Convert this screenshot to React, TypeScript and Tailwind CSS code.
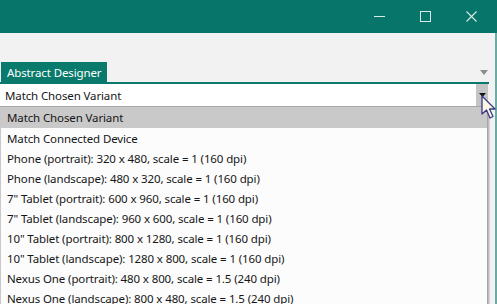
import React from "react";

const items = [
  "Match Chosen Variant",
  "Match Connected Device",
  "Phone (portrait): 320 x 480, scale = 1 (160 dpi)",
  "Phone (landscape): 480 x 320, scale = 1 (160 dpi)",
  "7\" Tablet (portrait): 600 x 960, scale = 1 (160 dpi)",
  "7\" Tablet (landscape): 960 x 600, scale = 1 (160 dpi)",
  "10\" Tablet (portrait): 800 x 1280, scale = 1 (160 dpi)",
  "10\" Tablet (landscape): 1280 x 800, scale = 1 (160 dpi)",
  "Nexus One (portrait): 480 x 800, scale = 1.5 (240 dpi)",
  "Nexus One (landscape): 800 x 480, scale = 1.5 (240 dpi)",
];

export default function App() {
  return (
    <div
      className="relative w-[497px] h-[304px] overflow-hidden flex flex-col bg-[#f2f2f2] text-[11.5px] tracking-[-0.12px] text-[#161616]"
      style={{ fontFamily: '"Noto Sans", "Open Sans", sans-serif' }}
    >
      {/* Title bar */}
      <div className="h-[33px] shrink-0 bg-[#08756a] flex items-center justify-end">
        <svg width="11" height="11" viewBox="0 0 11 11" className="mr-[35px]">
          <line x1="0" y1="5.5" x2="11" y2="5.5" stroke="#d8ebe8" strokeWidth="1" />
        </svg>
        <svg width="11" height="11" viewBox="0 0 11 11" className="mr-[35px]">
          <rect x="0.5" y="0.5" width="10" height="10" fill="none" stroke="#d8ebe8" strokeWidth="1" />
        </svg>
        <svg width="11" height="11" viewBox="0 0 11 11" className="mr-[20px]">
          <line x1="0.5" y1="0.5" x2="10.5" y2="10.5" stroke="#d8ebe8" strokeWidth="1.1" />
          <line x1="10.5" y1="0.5" x2="0.5" y2="10.5" stroke="#d8ebe8" strokeWidth="1.1" />
        </svg>
      </div>

      <div className="flex-1 flex">
        {/* main pane */}
        <div className="w-[495px] flex flex-col">
          <div className="h-[29px] shrink-0" />
          {/* tab row */}
          <div className="h-[20px] shrink-0 flex items-center w-[489px]">
            <div className="ml-[1px] w-[106px] h-[20px] bg-[#0a7a6c] text-white flex items-center pl-[6px] pt-[1px] whitespace-nowrap">
              Abstract Designer
            </div>
            <div className="flex-1" />
            <svg width="8" height="5" viewBox="0 0 8 5" className="mr-[1px] mt-[1px]">
              <path d="M0 0 L8 0 L4 5 Z" fill="#8c8c8c" />
            </svg>
          </div>
          <div className="h-[2px] w-[489px] bg-[#0b7a6c] shrink-0" />
          {/* combo */}
          <div className="h-[23px] w-[488px] shrink-0 flex bg-white border-b border-[#a8a8a8]">
            <div className="flex-1 flex items-center pl-[5px] pt-[1px]">Match Chosen Variant</div>
            <div className="w-[12px] h-full bg-[#c4c4c4] flex items-center justify-center">
              <svg width="7" height="4" viewBox="0 0 7 4">
                <path d="M0 0 L7 0 L3.5 4 Z" fill="#111" />
              </svg>
            </div>
          </div>
          {/* list */}
          <div className="w-[490px] flex">
            <div className="w-[487px] bg-[#fcfcfc] border-l border-[#c8c8c8] flex flex-col">
              {items.map((t, i) => (
                <div
                  key={i}
                  className={
                    "shrink-0 flex items-center pl-[6px] whitespace-nowrap " +
                    (i === 0 ? "h-[21px] pt-[1px] bg-[#c9c9c9]" : "h-[20px] pt-[1px]")
                  }
                >
                  {t}
                </div>
              ))}
            </div>
            <div className="w-[3px] bg-gradient-to-r from-[#9a9a9a] to-[#e0e0e0]" />
          </div>
        </div>
        {/* right window border */}
        <div className="w-[2px] bg-[#6aaba3]" />
      </div>

      {/* cursor */}
      <svg
        className="absolute left-[481px] top-[95px]"
        width="15"
        height="25"
        viewBox="0 0 15 25"
      >
        <path
          d="M1 1 L1 19 L5.5 15 L9 23 L12 21.5 L8.5 14 L14 14 Z"
          fill="#fbf8e6"
          stroke="#3a3a85"
          strokeWidth="1.3"
          strokeLinejoin="round"
        />
      </svg>
    </div>
  );
}
